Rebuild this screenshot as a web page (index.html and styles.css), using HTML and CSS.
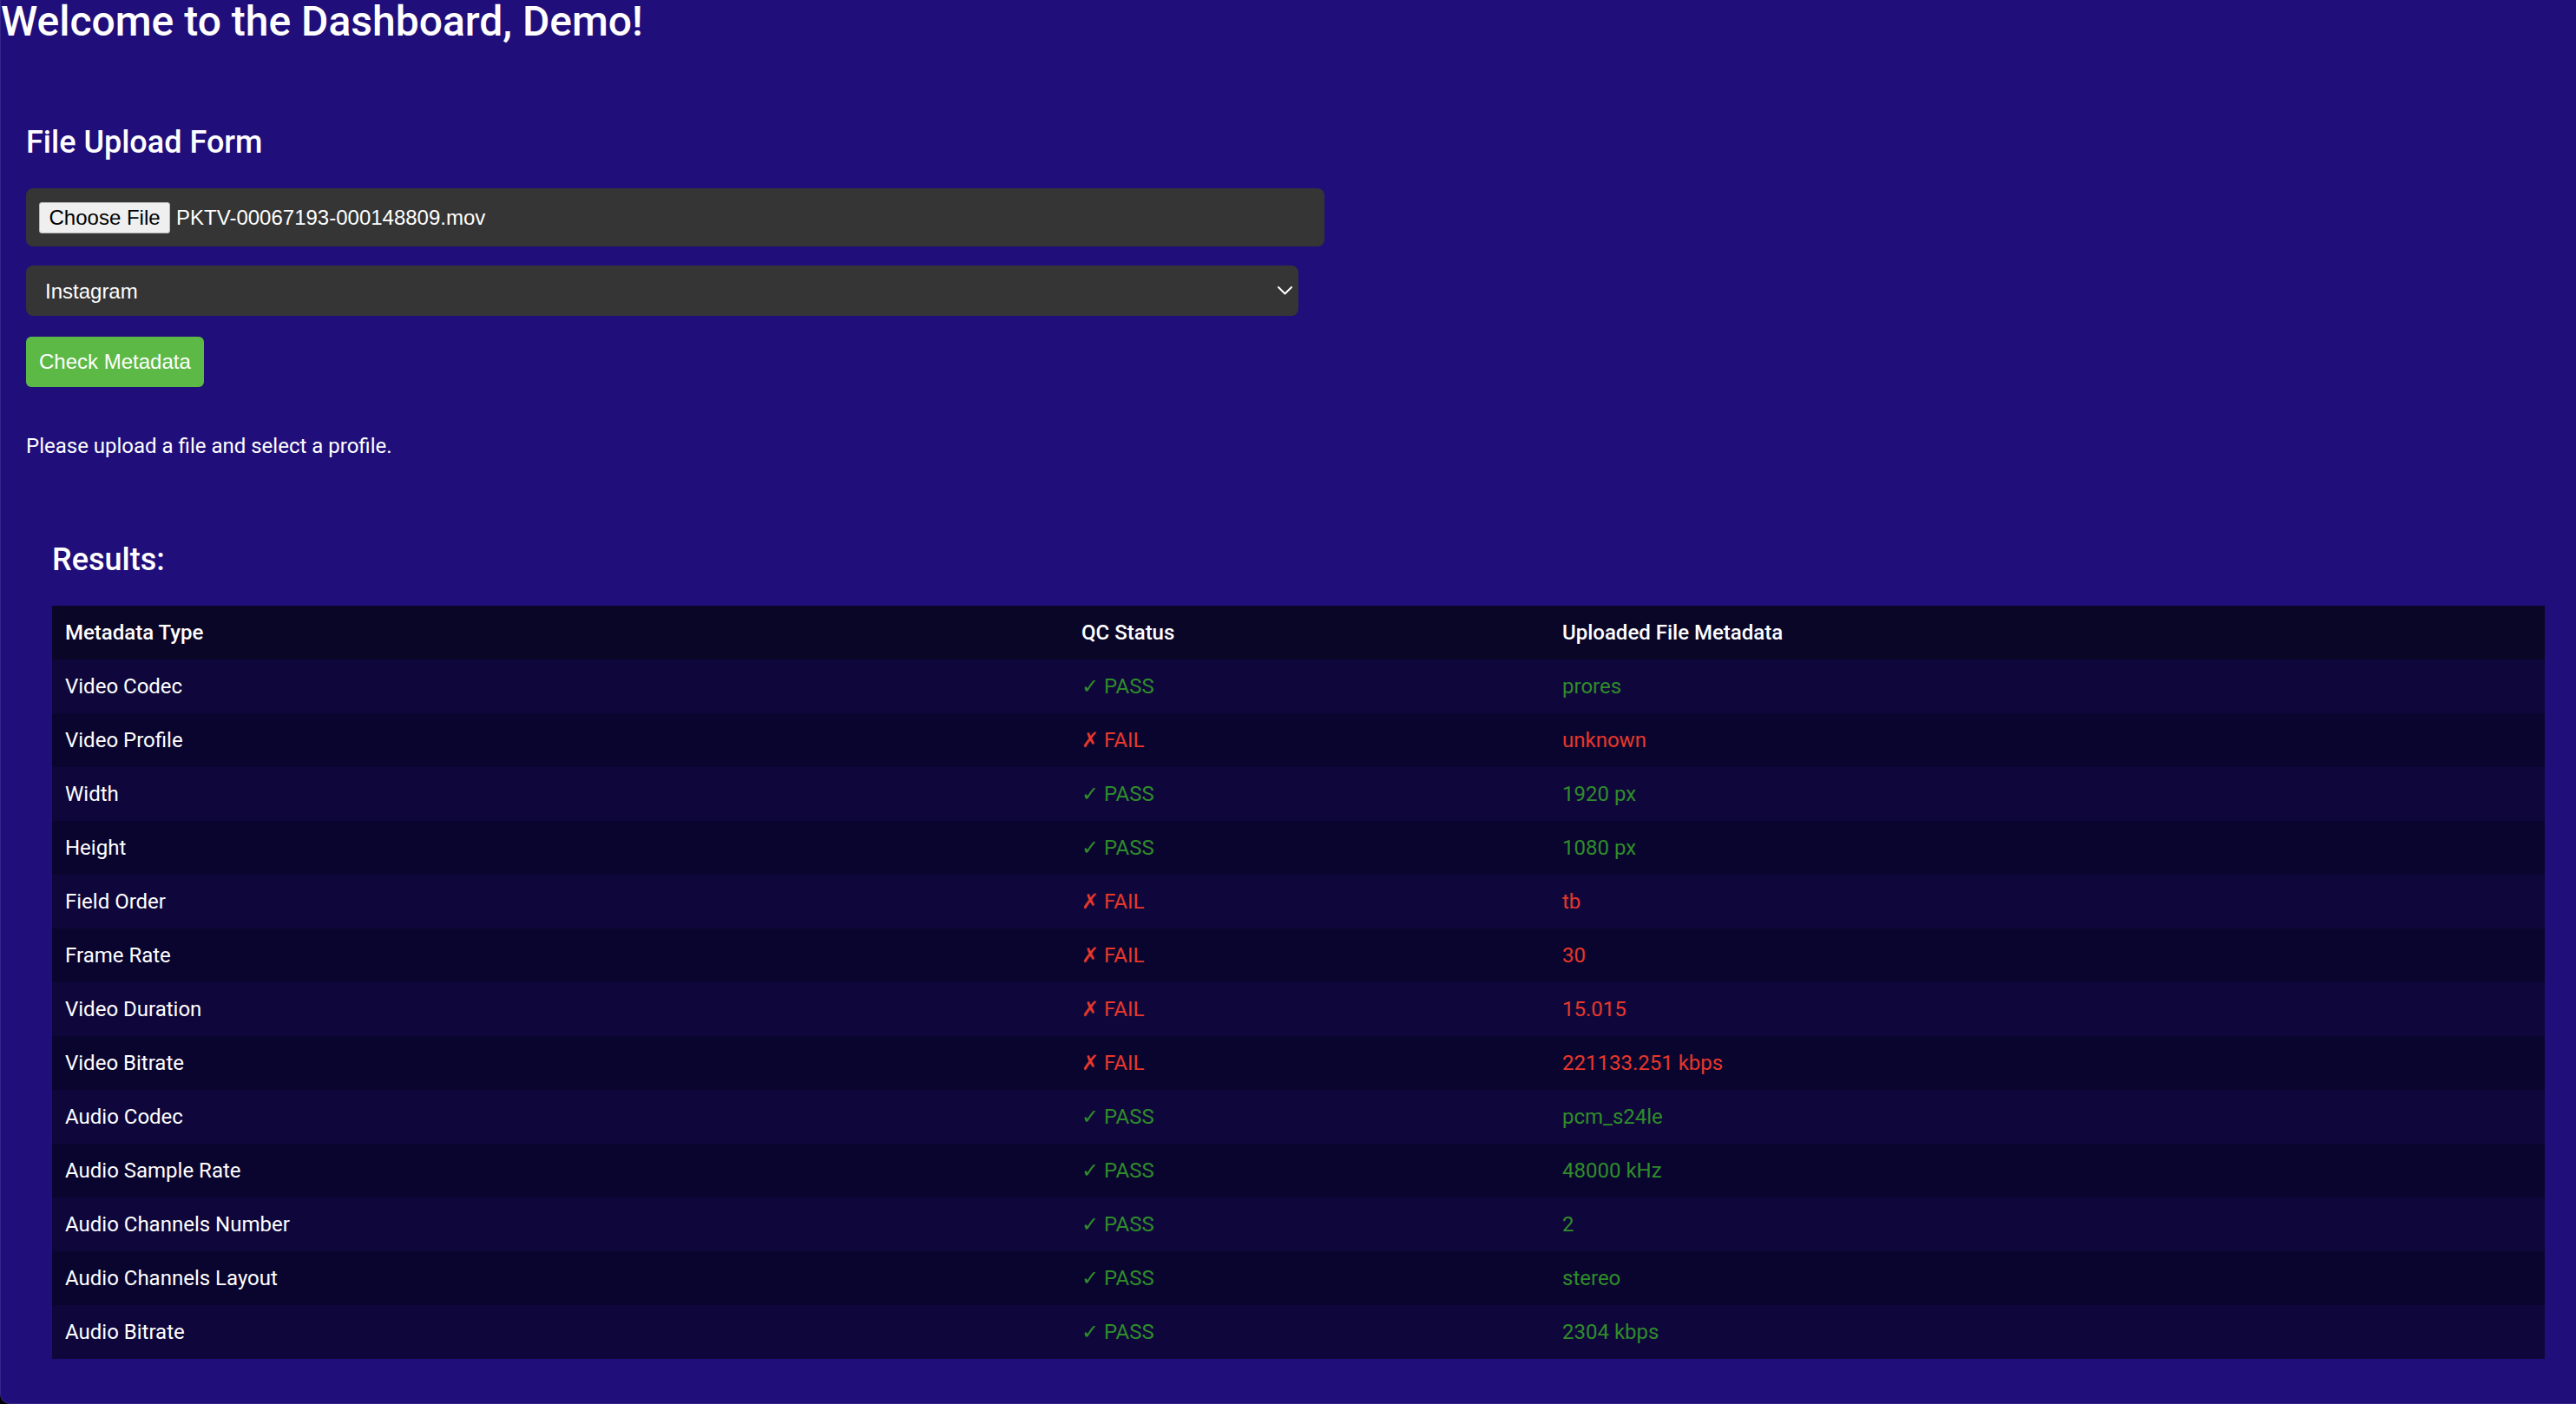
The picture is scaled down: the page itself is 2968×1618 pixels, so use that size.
FILE: index.html
```html
<!DOCTYPE html>
<html lang="en">
<head>
<meta charset="utf-8">
<title>Dashboard</title>
<link rel="stylesheet" href="styles.css">
</head>
<body>
<div class="page">
  <h1 class="title">Welcome to the Dashboard, Demo!</h1>

  <section class="upload">
    <h2 class="section-title">File Upload Form</h2>
    <form class="upload-form">
      <div class="file-box">
        <span class="file-button">Choose File</span>
        <span class="file-name">PKTV-00067193-000148809.mov</span>
      </div>
      <div class="select-wrap">
        <select class="profile-select">
          <option>Instagram</option>
        </select>
        <svg class="chevron" width="17" height="10" viewBox="0 0 17 10" aria-hidden="true">
          <polyline points="1,1 8.5,8.5 16,1" fill="none" stroke="#ffffff" stroke-width="2" stroke-linecap="round" stroke-linejoin="round"/>
        </svg>
      </div>
      <button type="button" class="check-button">Check Metadata</button>
    </form>
    <p class="status-msg">Please upload a file and select a profile.</p>
  </section>

  <section class="results">
    <h2 class="section-title">Results:</h2>
    <table class="results-table">
      <colgroup>
        <col class="col-type">
        <col class="col-status">
        <col class="col-meta">
      </colgroup>
      <thead>
        <tr><th>Metadata Type</th><th>QC Status</th><th>Uploaded File Metadata</th></tr>
      </thead>
      <tbody>
        <tr><td>Video Codec</td><td class="pass">✓ PASS</td><td class="pass">prores</td></tr>
        <tr><td>Video Profile</td><td class="fail">✗ FAIL</td><td class="fail">unknown</td></tr>
        <tr><td>Width</td><td class="pass">✓ PASS</td><td class="pass">1920 px</td></tr>
        <tr><td>Height</td><td class="pass">✓ PASS</td><td class="pass">1080 px</td></tr>
        <tr><td>Field Order</td><td class="fail">✗ FAIL</td><td class="fail">tb</td></tr>
        <tr><td>Frame Rate</td><td class="fail">✗ FAIL</td><td class="fail">30</td></tr>
        <tr><td>Video Duration</td><td class="fail">✗ FAIL</td><td class="fail">15.015</td></tr>
        <tr><td>Video Bitrate</td><td class="fail">✗ FAIL</td><td class="fail">221133.251 kbps</td></tr>
        <tr><td>Audio Codec</td><td class="pass">✓ PASS</td><td class="pass">pcm_s24le</td></tr>
        <tr><td>Audio Sample Rate</td><td class="pass">✓ PASS</td><td class="pass">48000 kHz</td></tr>
        <tr><td>Audio Channels Number</td><td class="pass">✓ PASS</td><td class="pass">2</td></tr>
        <tr><td>Audio Channels Layout</td><td class="pass">✓ PASS</td><td class="pass">stereo</td></tr>
        <tr><td>Audio Bitrate</td><td class="pass">✓ PASS</td><td class="pass">2304 kbps</td></tr>
      </tbody>
    </table>
  </section>
</div>
</body>
</html>
```

FILE: styles.css
```css
html, body {
  margin: 0;
  padding: 0;
  background: #000000;
}

.page {
  box-sizing: border-box;
  height: 1618px;
  overflow: hidden;
  background: #200e7b;
  border-left: 1px solid #34268a;
  border-bottom: 1px solid #34268a;
  border-bottom-left-radius: 12px;
  color: #ffffff;
  font-family: Roboto, "Liberation Sans", Arial, sans-serif;
}

.title {
  margin: 0;
  padding-top: 1px;
  font-size: 48px;
  font-weight: 500;
  line-height: 48px;
  color: #ffffff;
}

.upload {
  padding: 94px 30px 0 29px;
}

.section-title {
  margin: 0 0 32px;
  font-size: 36px;
  font-weight: 500;
  line-height: 42px;
  color: #ffffff;
}

.upload-form {
  display: flex;
  flex-direction: column;
  align-items: flex-start;
}

.file-box {
  box-sizing: border-box;
  display: flex;
  align-items: center;
  width: 1496px;
  height: 67px;
  padding: 0 15px;
  margin-bottom: 22px;
  background: #353535;
  border-radius: 8px;
  font-family: "Liberation Sans", Arial, sans-serif;
  font-size: 24px;
}

.file-button {
  box-sizing: border-box;
  display: inline-flex;
  align-items: center;
  height: 36px;
  padding: 0 10.5px;
  background: #efefef;
  color: #000000;
  border: 1px solid #b9b9b9;
  border-radius: 3px;
}

.file-name {
  margin-left: 7px;
  color: #ffffff;
}

.select-wrap {
  position: relative;
  width: 1466px;
  height: 58px;
  margin-bottom: 24px;
}

.profile-select {
  box-sizing: border-box;
  width: 100%;
  height: 58px;
  padding: 0 0 0 22px;
  margin: 0;
  -webkit-appearance: none;
  appearance: none;
  background: #353535;
  color: #ffffff;
  border: none;
  border-radius: 8px;
  font-family: "Liberation Sans", Arial, sans-serif;
  font-size: 24px;
  outline: none;
}

.chevron {
  position: absolute;
  right: 7px;
  top: 24px;
  pointer-events: none;
}

.check-button {
  box-sizing: border-box;
  width: 205px;
  height: 58px;
  padding: 0 15px;
  margin: 0;
  background: #5cb946;
  color: #ffffff;
  border: none;
  border-radius: 6px;
  font-family: "Liberation Sans", Arial, sans-serif;
  font-size: 24px;
  text-align: left;
}

.status-msg {
  margin: 55px 0 0;
  font-size: 24px;
  line-height: 26px;
  color: #ffffff;
}

.results {
  padding: 97px 36px 0 59px;
}

.results-table {
  width: 2872px;
  table-layout: fixed;
  border-collapse: collapse;
  font-size: 24px;
}

.col-type { width: 1171px; }
.col-status { width: 554px; }
.col-meta { width: 1147px; }

.results-table th,
.results-table td {
  height: 62px;
  padding: 0 15px;
  text-align: left;
  vertical-align: middle;
  white-space: nowrap;
}

.results-table th {
  font-weight: 500;
  color: #ffffff;
}

.results-table td {
  font-weight: 400;
  color: #ffffff;
}

.results-table thead tr {
  background: #0a0628;
}

.results-table tbody tr:nth-child(odd) {
  background: #0f073b;
}

.results-table tbody tr:nth-child(even) {
  background: #0a052f;
}

.results-table td.pass {
  color: #2f8c2a;
}

.results-table td.fail {
  color: #e8372b;
}
```
